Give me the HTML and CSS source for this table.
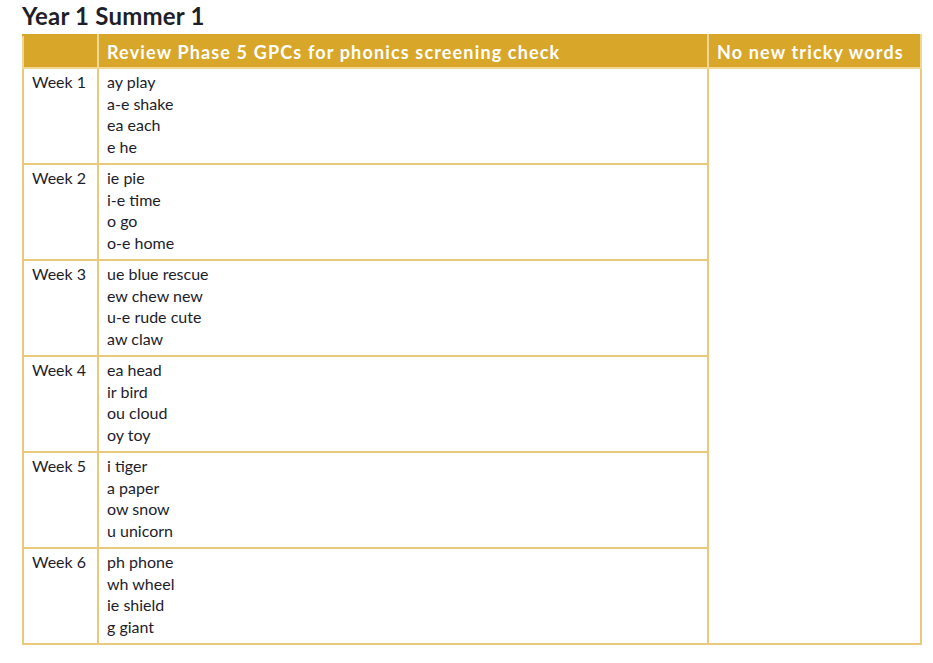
FILE: index.html
```html
<!DOCTYPE html>
<html>
<head>
<meta charset="utf-8">
<link rel="stylesheet" href="styles.css">
</head>
<body>
<h1 class="title">Year 1 Summer 1</h1>
<table class="plan">
  <thead>
    <tr>
      <th class="c-week"></th>
      <th class="c-gpc">Review Phase 5 GPCs for phonics screening check</th>
      <th class="c-tricky">No new tricky words</th>
    </tr>
  </thead>
  <tbody>
    <tr>
      <td class="c-week">Week 1</td>
      <td class="c-gpc">ay play<br>a-e shake<br>ea each<br>e he</td>
      <td class="c-tricky" rowspan="6"></td>
    </tr>
    <tr>
      <td class="c-week">Week 2</td>
      <td class="c-gpc">ie pie<br>i-e time<br>o go<br>o-e home</td>
    </tr>
    <tr>
      <td class="c-week">Week 3</td>
      <td class="c-gpc">ue blue rescue<br>ew chew new<br>u-e rude cute<br>aw claw</td>
    </tr>
    <tr>
      <td class="c-week">Week 4</td>
      <td class="c-gpc">ea head<br>ir bird<br>ou cloud<br>oy toy</td>
    </tr>
    <tr>
      <td class="c-week">Week 5</td>
      <td class="c-gpc">i tiger<br>a paper<br>ow snow<br>u unicorn</td>
    </tr>
    <tr>
      <td class="c-week">Week 6</td>
      <td class="c-gpc">ph phone<br>wh wheel<br>ie shield<br>g giant</td>
    </tr>
  </tbody>
</table>
</body>
</html>
```
FILE: styles.css
```css
html, body {
  margin: 0;
  padding: 0;
  background: #ffffff;
}
body {
  font-family: "Lato", "Open Sans", sans-serif;
  color: #1d1d2b;
  padding: 2px 0 0 22px;
}
.title {
  margin: 0;
  font-size: 24px;
  font-weight: 700;
  line-height: 28px;
  height: 32px;
  color: #1f1f29;
  letter-spacing: 0.2px;
}
.plan {
  border-collapse: collapse;
  width: 898px;
  table-layout: fixed;
}
.plan th, .plan td {
  border: 2px solid #e9ca7c;
  vertical-align: top;
  text-align: left;
}
.plan th {
  background: #d8a72a;
  color: #ffffff;
  font-size: 18px;
  font-weight: 700;
  height: 33px;
  padding: 0 8px;
  box-sizing: border-box;
  vertical-align: middle;
  border-color: #f0d794;
  letter-spacing: 1.15px;
}
.plan thead th { border-top-color: #d8a72a; }
.plan td {
  font-size: 16px;
  line-height: 21.5px;
  padding: 2px 8px 0 8px;
  height: 96px;
  box-sizing: border-box;
}
.c-week { width: 75px; }
.c-gpc { width: 610px; }
.c-tricky { width: 213px; }
```
